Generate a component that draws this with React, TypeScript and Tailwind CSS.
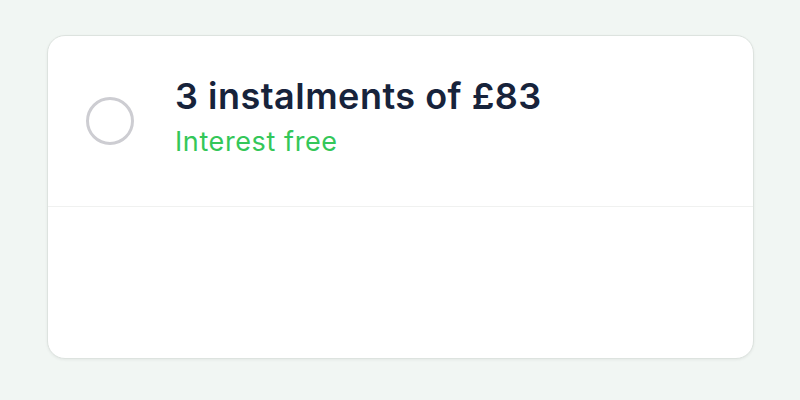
import React from 'react';

const App: React.FC = () => {
  return (
    <div
      className="w-[800px] h-[400px] bg-[#f1f6f3] pl-[47px] pt-[35px]"
      style={{ fontFamily: 'Inter, "Noto Sans", sans-serif' }}
    >
      {/* Payment option card */}
      <div className="w-[707px] h-[324px] bg-white rounded-[18px] border border-[#dde3df] shadow-[0_1px_3px_rgba(0,0,0,0.06)] overflow-hidden flex flex-col">
        <div className="h-[171px] flex items-start pl-[38px] pt-[40px] border-b border-[#f0f1f0]">
          <div className="w-[48px] h-[48px] mt-[21px] rounded-full border-[3px] border-[#cdcdd2] shrink-0" />
          <div className="ml-[41px]">
            <div className="text-[36px] leading-[40px] font-semibold text-[#17233b] tracking-[0.5px]">
              3 instalments of £83
            </div>
            <div className="text-[27px] leading-[32px] text-[#34c759] mt-[10px] tracking-[0.6px]">
              Interest free
            </div>
          </div>
        </div>
        <div className="flex-1" />
      </div>
    </div>
  );
};

export default App;
